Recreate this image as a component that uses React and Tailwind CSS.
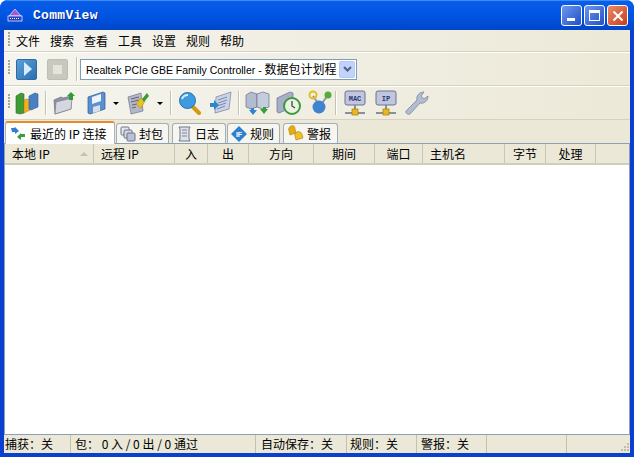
import React from 'react'

const ui = { fontFamily: '"Noto Sans CJK SC", "Liberation Sans", sans-serif' }

function Grip() {
  return (
    <div className="w-[3px] h-[18px] mx-[4px] flex flex-col gap-[1px] overflow-hidden">
      {[...Array(5)].map((_, i) => <div key={i} className="w-[2px] h-[2px] bg-[#a9a690]" />)}
    </div>
  )
}

function Sep() {
  return <div className="w-[1px] h-[24px] bg-[#c5c2ae] border-r border-white box-content" />
}

function Caret() {
  return <div className="w-0 h-0 border-l-[3px] border-r-[3px] border-t-[3px] border-l-transparent border-r-transparent border-t-black" />
}

function Bars() {
  return (
    <svg width="24" height="24" viewBox="0 0 24 24">
      <path d="M1 5l5-3 3 1v19l-4 1-4-1z" fill="#3f9c35" stroke="#2a6a25" strokeWidth=".6" />
      <path d="M9 9l3-1 3 1v10l-6 3z" fill="#f2b01e" stroke="#b47d10" strokeWidth=".6" />
      <path d="M14 5l6-3 3 1v13l-7 3-2-1z" fill="#4b7fc4" stroke="#2f5a96" strokeWidth=".6" />
    </svg>
  )
}

function Folder() {
  return (
    <svg width="24" height="24" viewBox="0 0 24 24">
      <path d="M2 9l7-3 2 1 8-2v13L3 23z" fill="#8f93a6" stroke="#6d7080" strokeWidth=".7" />
      <path d="M4 11l16-4-1 11L3 23z" fill="#d5d6de" stroke="#7d8090" strokeWidth=".7" />
      <path d="M19 1l4 4h-2v4h-4V5h-2z" fill="#2f9c3a" />
    </svg>
  )
}

function Disk() {
  return (
    <svg width="22" height="24" viewBox="0 0 22 24">
      <path d="M2 6l15-5 2 1v16L4 23l-2-1z" fill="#5a90cf" stroke="#2c5a94" strokeWidth=".7" />
      <path d="M6 6l9-3v7l-9 3z" fill="#eef3fa" />
      <path d="M7 16l7-2v6l-7 2z" fill="#d7dfe9" />
    </svg>
  )
}

function Clean() {
  return (
    <svg width="24" height="24" viewBox="0 0 24 24">
      <path d="M2 6l13-4 2 18-12 3z" fill="#b4b7c6" stroke="#71748a" strokeWidth=".7" />
      <path d="M5 8l8-2M5 11l8-2M6 14l5-1M6 17l4-1" stroke="#62657a" strokeWidth="1" />
      <path d="M10 13l5-6 4 3-4 7z" fill="#e8c31f" stroke="#a78a10" strokeWidth=".5" />
      <path d="M16 8l5-6 2 3-5 6z" fill="#3b9a34" />
    </svg>
  )
}

function Search() {
  return (
    <svg width="24" height="24" viewBox="0 0 24 24">
      <path d="M14 15l7 7" stroke="#d29a12" strokeWidth="4" strokeLinecap="round" />
      <circle cx="9.500" cy="9.500" r="8" fill="#3f9be0" stroke="#2070b4" />
      <path d="M4 8c1-3 4-4 6-4" stroke="#d6eeff" strokeWidth="2" fill="none" />
    </svg>
  )
}

function DocArrow() {
  return (
    <svg width="24" height="24" viewBox="0 0 24 24">
      <path d="M7 6l15-5-2 17-14 4z" fill="#c9d2e6" stroke="#75809e" strokeWidth=".7" />
      <path d="M9 9l9-3M9 12l9-3M8 15l9-3M8 18l8-3" stroke="#7c89a8" strokeWidth="1" />
      <path d="M1 12h4V9l5 5-5 5v-3H1z" fill="#2e86d0" />
    </svg>
  )
}

function Servers() {
  return (
    <svg width="26" height="26" viewBox="0 0 26 26">
      <path d="M1 5l5-3 6 2v13l-6 2-5-2z" fill="#b3bbcf" stroke="#68708a" strokeWidth=".7" />
      <path d="M12 4l6-2 6 2v13l-6 2-6-2z" fill="#c5ccdc" stroke="#68708a" strokeWidth=".7" />
      <path d="M6 18h3v2h3l-4 5-4-5h2z" fill="#2e86d0" />
      <path d="M21 17h-3v2h-3l4 5 4-5h-2z" fill="#38a03a" />
    </svg>
  )
}

function Clock() {
  return (
    <svg width="26" height="26" viewBox="0 0 26 26">
      <path d="M1 8l13-6 3 1v14L3 23l-2-1z" fill="#a8adca" stroke="#6b708c" strokeWidth=".7" />
      <circle cx="16" cy="16" r="8" fill="#e9f3e4" stroke="#3d9a3c" strokeWidth="2" />
      <path d="M16 11v5l3 2" stroke="#3b4a3e" strokeWidth="1.300" fill="none" />
    </svg>
  )
}

function Nodes() {
  return (
    <svg width="24" height="26" viewBox="0 0 24 26">
      <path d="M5 6l7 10M12 16L20 5" stroke="#8b96a8" strokeWidth="2" />
      <circle cx="5" cy="5" r="3.500" fill="none" stroke="#e3bc26" strokeWidth="2" />
      <circle cx="20" cy="5" r="3.500" fill="#58ab37" />
      <circle cx="11" cy="17" r="6.500" fill="#3f83cf" />
    </svg>
  )
}

function Net({ label }) {
  return (
    <svg width="22" height="26" viewBox="0 0 22 26">
      <rect x="1" y="1" width="20" height="14" rx="2" fill="#bfc6de" stroke="#6b7291" />
      <text x="11" y="11" textAnchor="middle" fontSize="7" fontFamily="Liberation Mono" fontWeight="700" fill="#2c3870">{label}</text>
      <path d="M11 15v4M1 23h20" stroke="#8a8f9c" strokeWidth="2" />
      <rect x="8" y="19" width="6" height="6" fill="#ecb71c" stroke="#a37d0e" strokeWidth=".7" />
    </svg>
  )
}

function Wrench() {
  return (
    <svg width="26" height="26" viewBox="0 0 26 26">
      <path d="M2 21L13 10c-1-4 2-8 7-8l-3 4 3 3 4-3c0 5-4 8-8 7L6 24c-2 1-5-1-4-3z" fill="#b3bdd2" stroke="#7a849c" strokeWidth=".8" />
    </svg>
  )
}

function Swap() {
  return (
    <svg width="16" height="16" viewBox="0 0 16 16">
      <path d="M1 2h3l1-1 4 4-4 3V6H2z" fill="#2e7fd0" />
      <path d="M15 8v3H11v3L7 11l4-4v1z" fill="#38a03a" />
    </svg>
  )
}

function Packets() {
  return (
    <svg width="16" height="16" viewBox="0 0 16 16">
      <rect x="1" y="1" width="8" height="8" rx="1" fill="#e7e9f0" stroke="#6e7488" />
      <rect x="4" y="4" width="8" height="8" rx="1" fill="#d3d7e4" stroke="#6e7488" />
      <rect x="7" y="7" width="8" height="8" rx="1" fill="#b9c0d6" stroke="#6e7488" />
    </svg>
  )
}

function Scroll() {
  return (
    <svg width="16" height="16" viewBox="0 0 16 16">
      <path d="M3 1h11l-1 2v10l1 2H3l1-2V3z" fill="#dfe2ea" stroke="#6e7488" />
      <path d="M6 4h5M6 7h5M6 10h5" stroke="#7d8398" />
    </svg>
  )
}

function RuleIcon() {
  return (
    <svg width="16" height="16" viewBox="0 0 16 16">
      <path d="M8 0l8 8-8 8-8-8z" fill="#2f7fd0" />
      <text x="8" y="11" textAnchor="middle" fontSize="7" fontFamily="Liberation Sans" fontWeight="700" fill="#fff">IF</text>
    </svg>
  )
}

function Bell() {
  return (
    <svg width="17" height="17" viewBox="0 0 17 17">
      <path d="M4 1c2-1 4 0 4 3l1 4-6 2-1-4c-1-2 0-4 2-5z" fill="#e5ad14" stroke="#a97b08" strokeWidth=".6" />
      <path d="M10 7c2-1 4 0 5 2l1 4-7 2-1-4c-.5-2 0-3 2-4z" fill="#efc02e" stroke="#a97b08" strokeWidth=".6" />
    </svg>
  )
}

function Tab({ icon, label, w, active }) {
  return (
    <div
      className={
        active
          ? 'flex items-center gap-[4px] pl-[4px] h-[23px] -mb-[1px] bg-white rounded-t-[3px] border-t-2 border-t-[#e68b2c] border-x border-x-[#a9b4c0]'
          : 'flex items-center gap-[3px] pl-[3px] h-[20px] bg-[#f6f5ee] rounded-t-[3px] border border-b-0 border-[#a3aebc]'
      }
      style={{ width: w }}
    >
      {icon}
      <span className="text-[12px] leading-none text-black whitespace-nowrap">{label}</span>
    </div>
  )
}

function Col({ label, w, center, sort }) {
  return (
    <div
      className={`relative flex items-center h-full border-r border-r-[#c9c6b4] ${center ? 'justify-center' : 'pl-[7px]'}`}
      style={{ width: w }}
    >
      <span className="text-[12px] leading-none text-black whitespace-nowrap">{label}</span>
      {sort && <span className="absolute right-[5px] top-[8px] w-0 h-0 border-l-[4px] border-r-[4px] border-b-[4px] border-l-transparent border-r-transparent border-b-[#c4c2b6]" />}
    </div>
  )
}

function Cell({ w, pl = 1, children }) {
  return (
    <div className="flex items-center h-full border-r border-r-[#c4c1ad] text-[12px] leading-none text-black whitespace-pre" style={{ width: w, paddingLeft: pl }}>
      {children}
    </div>
  )
}

const columns = [
  { label: '本地 IP', w: 89, sort: true },
  { label: '远程 IP', w: 81 },
  { label: '入', w: 33, center: true },
  { label: '出', w: 41, center: true },
  { label: '方向', w: 65, center: true },
  { label: '期间', w: 61, center: true },
  { label: '端口', w: 48, center: true },
  { label: '主机名', w: 82 },
  { label: '字节', w: 41, center: true },
  { label: '处理', w: 50, center: true },
]

export default function App() {
  return (
    <div className="w-[634px] h-[457px] flex flex-col overflow-hidden bg-[#0a3fd0] rounded-t-[8px]" style={ui}>
      {/* Title bar */}
      <div className="h-[30px] shrink-0 flex items-center pl-[5px] pr-[6px] bg-gradient-to-b from-[#0a5ee8] via-[#0054e3] to-[#0046c8] border-t border-t-[#3c8cf8]">
        <svg width="18" height="16" viewBox="0 0 18 16" className="ml-[1px] shrink-0">
          <path d="M9 1l6 7H3z" fill="#9a5ad0" stroke="#fff" strokeWidth=".6" />
          <rect x="2" y="8" width="14" height="5" fill="#2c3ec0" stroke="#fff" strokeWidth=".7" />
          <path d="M4 10.500h10" stroke="#fff" strokeDasharray="1 1" />
        </svg>
        <span className="ml-[9px] text-[13px] leading-none font-bold text-white tracking-[.3px] [text-shadow:1px_1px_0_#0a2a8a]" style={{ fontFamily: '"Liberation Mono", monospace' }}>CommView</span>
        <div className="ml-auto flex gap-[2px]">
          <div className="w-[21px] h-[21px] rounded-[3px] border border-white bg-gradient-to-br from-[#6f97ec] to-[#1f4fc8] flex items-end pl-[5px] pb-[4px]">
            <div className="w-[8px] h-[3px] bg-white" />
          </div>
          <div className="w-[21px] h-[21px] rounded-[3px] border border-white bg-gradient-to-br from-[#6f97ec] to-[#1f4fc8] flex items-center justify-center">
            <div className="w-[11px] h-[11px] border border-white border-t-[3px]" />
          </div>
          <div className="w-[21px] h-[21px] rounded-[3px] border border-white bg-gradient-to-br from-[#ec8a68] to-[#c73a12] flex items-center justify-center">
            <svg width="12" height="12" viewBox="0 0 12 12"><path d="M1.500 1.500l9 9M10.500 1.500l-9 9" stroke="#fff" strokeWidth="2" /></svg>
          </div>
        </div>
      </div>

      {/* Window body */}
      <div className="flex-1 min-h-0 flex flex-col mx-[4px] mb-[4px] bg-[#ece9d8]">
        {/* Menu */}
        <div className="h-[22px] shrink-0 flex items-center bg-gradient-to-r from-[#f5f4ee] to-[#ece9d8] border-b border-b-[#d6d2bd]">
          <Grip />
          <div className="flex gap-[11px] ml-[1px] text-[12px] leading-none text-black">
            {['文件', '搜索', '查看', '工具', '设置', '规则', '帮助'].map(m => <span key={m} className="w-[23px] whitespace-nowrap">{m}</span>)}
          </div>
        </div>

        {/* Capture toolbar */}
        <div className="h-[34px] shrink-0 flex items-center bg-gradient-to-r from-[#f5f4ee] to-[#ece9d8] border-t border-t-white border-b border-b-[#d6d2bd]">
          <Grip />
          <div className="w-[21px] h-[21px] ml-[1px] rounded-[2px] border border-[#2c6ba8] bg-gradient-to-br from-[#5aa0d8] to-[#2c6fb0] flex items-center justify-center">
            <div className="w-0 h-0 ml-[2px] border-l-[8px] border-t-[7px] border-b-[7px] border-l-[#d7ecff] border-t-transparent border-b-transparent" />
          </div>
          <div className="w-[21px] h-[21px] ml-[10px] rounded-[2px] border border-[#bdbdb2] bg-[#c9c8bf] flex items-center justify-center">
            <div className="w-[9px] h-[9px] bg-[#e4e3dc]" />
          </div>
          <div className="ml-[8px] mr-[2px]"><Sep /></div>
          <div className="w-[277px] h-[21px] flex items-center pl-[5px] bg-white border border-[#7f9db9]">
            <span className="flex-1 text-[12px] leading-none text-black whitespace-nowrap">
              <span className="text-[10.500px]" style={{ fontFamily: '"Liberation Sans", sans-serif' }}>Realtek PCIe GBE Family Controller - </span>数据包计划程
            </span>
            <div className="w-[16px] h-[17px] mr-[1px] rounded-[2px] bg-[#c1d3fb] border border-[#b4c8f0] flex items-center justify-center">
              <svg width="9" height="7" viewBox="0 0 9 7"><path d="M1 1l3.500 3.500L8 1" fill="none" stroke="#4d6185" strokeWidth="2" /></svg>
            </div>
          </div>
        </div>

        {/* Main toolbar */}
        <div className="h-[34px] shrink-0 flex items-center bg-gradient-to-r from-[#f5f4ee] to-[#ece9d8] border-t border-t-white border-b border-b-[#d6d2bd]">
          <Grip />
          <div className="-ml-[1px] w-[25px] flex justify-center"><Bars /></div>
          <div className="ml-[6px] mr-[4px]"><Sep /></div>
          <div className="w-[26px] flex justify-center"><Folder /></div>
          <div className="w-[22px] ml-[9px] flex justify-center"><Disk /></div>
          <div className="ml-[5px]"><Caret /></div>
          <div className="w-[24px] ml-[7px] flex justify-center"><Clean /></div>
          <div className="ml-[7px]"><Caret /></div>
          <div className="ml-[7px]"><Sep /></div>
          <div className="w-[24px] ml-[6px] flex justify-center"><Search /></div>
          <div className="w-[24px] ml-[7px] flex justify-center"><DocArrow /></div>
          <div className="ml-[5px]"><Sep /></div>
          <div className="w-[26px] ml-[5px] flex justify-center"><Servers /></div>
          <div className="w-[26px] ml-[5px] flex justify-center"><Clock /></div>
          <div className="w-[24px] ml-[6px] flex justify-center"><Nodes /></div>
          <div className="ml-[3px]"><Sep /></div>
          <div className="w-[22px] ml-[7px] flex justify-center"><Net label="MAC" /></div>
          <div className="w-[22px] ml-[9px] flex justify-center"><Net label="IP" /></div>
          <div className="w-[26px] ml-[7px] flex justify-center"><Wrench /></div>
        </div>

        {/* Tabs */}
        <div className="h-[24px] shrink-0 flex items-end gap-[1px] pl-[1px] bg-[#ebe8d8] border-b border-b-[#8ba0b4]">
          <Tab active w={110} label="最近的 IP 连接" icon={<Swap />} />
          <Tab w={53} label="封包" icon={<Packets />} />
          <div className="w-[1px]" />
          <Tab w={54} label="日志" icon={<Scroll />} />
          <Tab w={53} label="规则" icon={<RuleIcon />} />
          <div className="w-[1px]" />
          <Tab w={55} label="警报" icon={<Bell />} />
        </div>

        {/* List */}
        <div className="flex-1 min-h-0 flex flex-col bg-white border-x border-x-[#8ba0b4]">
          <div className="h-[21px] shrink-0 flex bg-[#ebe8d8] border-b-2 border-b-[#d0cdb9]">
            {columns.map(c => <Col key={c.label} {...c} />)}
          </div>
          <div className="flex-1" />
        </div>

        {/* Status bar */}
        <div className="h-[19px] shrink-0 flex items-center bg-[#ebe8d8] border-t border-t-[#8ba0b4]">
          <Cell w={67}>捕获：关</Cell>
          <Cell w={185} pl={4}>包： 0 入 / 0 出 / 0 通过</Cell>
          <Cell w={91} pl={5}>自动保存：关</Cell>
          <Cell w={70} pl={3}>规则：关</Cell>
          <Cell w={70} pl={4}>警报：关</Cell>
          <Cell w={80} />
          <div className="relative flex-1 h-full">
            <svg width="10" height="10" viewBox="0 0 10 10" className="absolute right-[1px] bottom-[1px]">
              <path d="M8 1h2v2H8zM5 4h2v2H5zM8 4h2v2H8zM2 7h2v2H2zM5 7h2v2H5zM8 7h2v2H8z" fill="#c2bfa9" />
            </svg>
          </div>
        </div>
      </div>
    </div>
  )
}
